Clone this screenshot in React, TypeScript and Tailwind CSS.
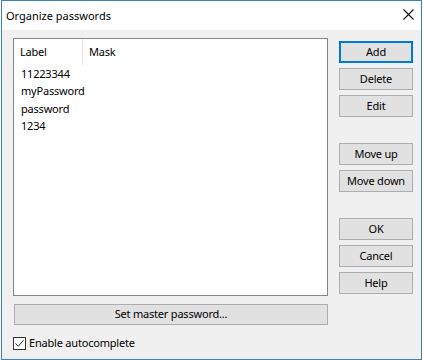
import React, { useState } from 'react';

const entries = ['11223344', 'myPassword', 'password', '1234'];

function DlgButton({ label, primary, className }: { label: string; primary?: boolean; className?: string }) {
  return (
    <button
      className={
        'h-[22px] w-[74px] bg-[#e1e1e1] text-[11px] tracking-[-0.2px] text-black flex items-center justify-center ' +
        (primary ? 'border-2 border-[#0078d7] ' : 'border border-[#adadad] ') +
        (className || '')
      }
    >
      {label}
    </button>
  );
}

export default function App() {
  const [autocomplete, setAutocomplete] = useState(true);

  return (
    <div className="w-[423px] h-[361px] bg-white pl-[1px]" style={{ fontFamily: '"Noto Sans", "Open Sans", sans-serif' }}>
      <div className="w-[421px] h-[360px] border border-[#3b84bd] flex flex-col">
        {/* title bar */}
        <div className="h-[29px] bg-white flex items-center justify-between pl-[4px] pr-[7px] shrink-0">
          <span className="text-[11px] text-black leading-none mt-[-1px]">Organize passwords</span>
          <svg width="11" height="11" viewBox="0 0 11 11" className="mt-[-2px]">
            <path d="M0.5 0.5 L10.5 10.5 M10.5 0.5 L0.5 10.5" stroke="#111" strokeWidth="1.1" />
          </svg>
        </div>

        <div className="flex-1 bg-[#f0f0f0] pl-[11px] pt-[8px] flex flex-col text-[11px] tracking-[-0.2px] text-black">
          <div className="flex gap-[11px]">
            <div className="flex flex-col">
              {/* list view */}
              <div className="w-[315px] h-[258px] bg-white border border-[#828790] flex flex-col">
                <div className="h-[26px] flex">
                  <div className="w-[69px] pl-[6px] flex items-center border-r border-[#e5e5e5]">Label</div>
                  <div className="pl-[6px] flex items-center">Mask</div>
                </div>
                <div className="flex flex-col pl-[7px]">
                  {entries.map((e) => (
                    <div key={e} className="h-[17.5px] flex items-center">{e}</div>
                  ))}
                </div>
              </div>
              <button className="mt-[8px] ml-[1px] w-[314px] h-[21px] bg-[#e1e1e1] border border-[#adadad] flex items-center justify-center">
                Set master password...
              </button>
            </div>

            <div className="flex flex-col pt-[3px]">
              <DlgButton label="Add" primary />
              <DlgButton label="Delete" className="mt-[5px]" />
              <DlgButton label="Edit" className="mt-[5px]" />
              <DlgButton label="Move up" className="mt-[26px]" />
              <DlgButton label="Move down" className="mt-[5px]" />
              <DlgButton label="OK" className="mt-[26px]" />
              <DlgButton label="Cancel" className="mt-[5px]" />
              <DlgButton label="Help" className="mt-[5px]" />
            </div>
          </div>

          <label className="mt-[10px] flex items-center gap-[3px] cursor-default" onClick={() => setAutocomplete(!autocomplete)}>
            <span className="w-[13px] h-[13px] bg-white border border-[#333] flex items-center justify-center">
              {autocomplete && (
                <svg width="11" height="11" viewBox="0 0 11 11">
                  <path d="M1.5 5.5 L4.2 8.3 L9.6 2.2" stroke="#222" strokeWidth="1" fill="none" />
                </svg>
              )}
            </span>
            <span>Enable autocomplete</span>
          </label>
        </div>
      </div>
    </div>
  );
}
